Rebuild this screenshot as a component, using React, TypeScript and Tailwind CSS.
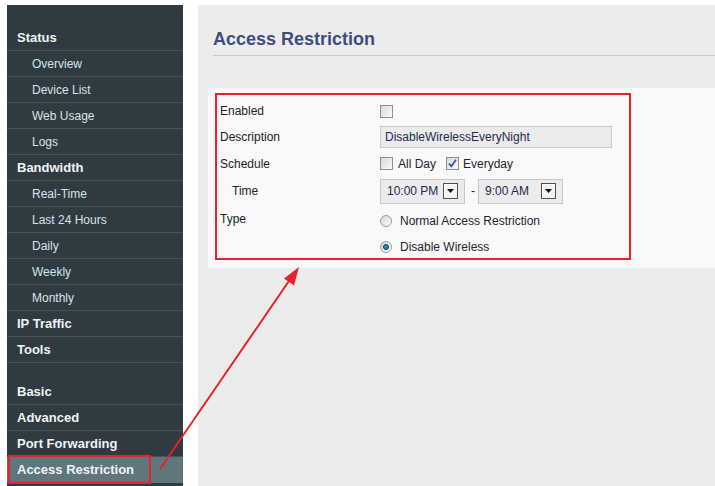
import React from 'react'

type NavItem = { label: string; kind: 'head' | 'sub' | 'gap'; active?: boolean }

const NAV: NavItem[] = [
  { label: 'Status', kind: 'head' },
  { label: 'Overview', kind: 'sub' },
  { label: 'Device List', kind: 'sub' },
  { label: 'Web Usage', kind: 'sub' },
  { label: 'Logs', kind: 'sub' },
  { label: 'Bandwidth', kind: 'head' },
  { label: 'Real-Time', kind: 'sub' },
  { label: 'Last 24 Hours', kind: 'sub' },
  { label: 'Daily', kind: 'sub' },
  { label: 'Weekly', kind: 'sub' },
  { label: 'Monthly', kind: 'sub' },
  { label: 'IP Traffic', kind: 'head' },
  { label: 'Tools', kind: 'head' },
  { label: '', kind: 'gap' },
  { label: 'Basic', kind: 'head' },
  { label: 'Advanced', kind: 'head' },
  { label: 'Port Forwarding', kind: 'head' },
  { label: 'Access Restriction', kind: 'head', active: true },
]

function Sidebar() {
  return (
    <nav className="w-[176px] shrink-0 bg-[#2f3b40] pt-[20px]">
      {NAV.map((item, i) => {
        if (item.kind === 'gap') return <div key={i} className="h-[16px]" />
        return (
          <div
            key={i}
            className={
              'relative flex h-[26px] items-center border-b border-[#47555b] ' +
              (item.active ? 'bg-[#5e767c] border-transparent ' : '') +
              (item.kind === 'head'
                ? 'pl-[10px] text-[13px] font-bold text-[#eef3f4]'
                : 'pl-[25px] text-[12px] text-[#d3e4ec]')
            }
          >
            {item.label}
            {item.active && (
              <span className="pointer-events-none absolute left-[1px] top-[-2px] h-[29px] w-[143px] border-2 border-[#e8212b]" />
            )}
          </div>
        )
      })}
    </nav>
  )
}

function Check({ checked }: { checked?: boolean }) {
  return (
    <span className="flex h-[13px] w-[13px] shrink-0 items-center justify-center border border-[#8f8f8f] bg-linear-to-br from-[#d9d9d9] to-[#fbfbfb]">
      {checked && (
        <svg width="11" height="11" viewBox="0 0 11 11">
          <path d="M2 5.5 L4.3 8.3 L9 1.8" fill="none" stroke="#3b4ea3" strokeWidth="1.7" />
        </svg>
      )}
    </span>
  )
}

function Radio({ checked }: { checked?: boolean }) {
  return (
    <span className="flex h-[12px] w-[12px] shrink-0 items-center justify-center rounded-full border border-[#9c9c9c] bg-linear-to-br from-[#d6d6d6] to-[#fdfdfd]">
      {checked && <span className="h-[6px] w-[6px] rounded-full border border-[#0f3a5c] bg-[#2a86c6]" />}
    </span>
  )
}

function Select({ value, width }: { value: string; width: string }) {
  return (
    <div className={'flex h-[25px] items-center justify-between border border-[#c6c6c6] bg-[#ebebeb] pl-[6px] pr-[6px] text-[#1d2a50] ' + width}>
      <span>{value}</span>
      <span className="flex h-[16px] w-[15px] items-center justify-center border border-[#4f4f4f] bg-[#f3f3f3] shadow-[inset_1px_1px_0_#fff]">
        <svg width="7" height="4" viewBox="0 0 7 4">
          <path d="M0 0 H7 L3.5 4 Z" fill="#111" />
        </svg>
      </span>
    </div>
  )
}

function Row({ label, h, indent, children }: { label: string; h: string; indent?: boolean; children?: React.ReactNode }) {
  return (
    <div className={'flex items-center ' + h}>
      <div className={'w-[163px] shrink-0 text-[#222] ' + (indent ? 'pl-[15px]' : 'pl-[3px]')}>{label}</div>
      <div className="flex items-center">{children}</div>
    </div>
  )
}

export default function App() {
  return (
    <div className="relative flex h-[486px] w-[715px] overflow-hidden bg-white pl-[7px] pt-[5px] font-['Liberation_Sans',Arial,sans-serif]">
      <Sidebar />
      <main className="ml-[15px] flex-1 bg-[#ececec]">
        <div className="ml-[15px] border-b border-[#c9c9c9] pb-[5px] pt-[23px]">
          <h1 className="text-[18px] leading-[22px] font-bold text-[#3c4e7d]">Access Restriction</h1>
        </div>

        <div className="ml-[10px] mt-[32px] bg-[#f9f9f9] pb-[8px] pl-[7px] pt-[5px] text-[12px]">
          <div className="h-[167px] w-[416px] border-2 border-[#e8212b] pt-[3px]">
            <Row label="Enabled" h="h-[26px]">
              <Check />
            </Row>
            <Row label="Description" h="h-[26px]">
              <div className="flex h-[22px] w-[232px] items-center border border-[#c9c9c9] bg-[#ebebeb] pl-[4px] text-[#1d2a50]">
                DisableWirelessEveryNight
              </div>
            </Row>
            <Row label="Schedule" h="h-[27px]">
              <Check />
              <span className="ml-[5px] text-[#1e2433]">All Day</span>
              <span className="ml-[10px]">
                <Check checked />
              </span>
              <span className="ml-[4px] text-[#1e2433]">Everyday</span>
            </Row>
            <Row label="Time" h="h-[28px]" indent>
              <Select value="10:00 PM" width="w-[85px]" />
              <span className="ml-[6px] mr-[3px] text-[#222]">-</span>
              <Select value="9:00 AM" width="w-[85px]" />
            </Row>
            <Row label="Type" h="h-[28px]">
              <span className="mt-[3px] flex items-center">
                <Radio />
                <span className="ml-[8px] text-[#1e2433]">Normal Access Restriction</span>
              </span>
            </Row>
            <Row label="" h="h-[26px]">
              <span className="mt-[2px] flex items-center">
                <Radio checked />
                <span className="ml-[8px] text-[#1e2433]">Disable Wireless</span>
              </span>
            </Row>
          </div>
        </div>
      </main>

      <svg className="pointer-events-none absolute left-0 top-0" width="715" height="486">
        <line x1="160" y1="469" x2="291" y2="278" stroke="#e8212b" strokeWidth="2" />
        <polygon points="299,267 284,278.5 294,285.5" fill="#e8212b" />
      </svg>
    </div>
  )
}
